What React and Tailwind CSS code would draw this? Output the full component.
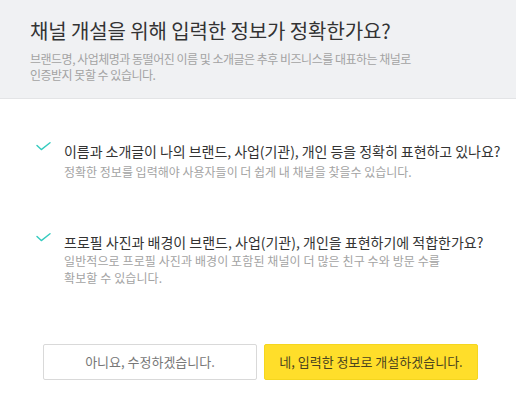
import React from "react";

function Check() {
  return (
    <svg width="15" height="10" viewBox="0 0 15 10" className="shrink-0">
      <polyline points="1,3.4 5.3,7.6 14,0.8" fill="none" stroke="#35cbbf" strokeWidth="1.4" strokeLinecap="round" strokeLinejoin="round" />
    </svg>
  );
}

export default function App() {
  const font = { fontFamily: '"Noto Sans CJK KR", "Noto Sans", sans-serif' };
  return (
    <div className="w-[516px] h-[416px] bg-white" style={font}>
      <div className="bg-[#f0f1f3] border-b border-[#e3e4e6] pl-[30px] pt-[18px] pb-[15px]">
        <h1 className="text-[20px] leading-[26px] text-[#333] tracking-[-0.1px]">채널 개설을 위해 입력한 정보가 정확한가요?</h1>
        <p className="mt-[7px] text-[12px] leading-[16px] text-[#a3a3a3] tracking-[-0.5px]">
          브랜드명, 사업체명과 동떨어진 이름 및 소개글은 추후 비즈니스를 대표하는 채널로
          <br />
          인증받지 못할 수 있습니다.
        </p>
      </div>
      <div className="pl-[36px] pt-[42px]">
        <div className="flex gap-[13px]">
          <div className="pt-[1px]"><Check /></div>
          <div>
            <div className="text-[14px] leading-[20px] text-[#333] tracking-[-0.05px]">이름과 소개글이 나의 브랜드, 사업(기관), 개인 등을 정확히 표현하고 있나요?</div>
            <div className="mt-[2px] text-[12px] leading-[17px] text-[#a3a3a3]">정확한 정보를 입력해야 사용자들이 더 쉽게 내 채널을 찾을수 있습니다.</div>
          </div>
        </div>
        <div className="flex gap-[13px] mt-[52px]">
          <div className="pt-[1px]"><Check /></div>
          <div>
            <div className="text-[14px] leading-[20px] text-[#333] tracking-[0px]">프로필 사진과 배경이 브랜드, 사업(기관), 개인을 표현하기에 적합한가요?</div>
            <div className="text-[12px] leading-[17px] text-[#a3a3a3] tracking-[0.1px]">
              일반적으로 프로필 사진과 배경이 포함된 채널이 더 많은 친구 수와 방문 수를
              <br />
              확보할 수 있습니다.
            </div>
          </div>
        </div>
      </div>
      <div className="flex gap-[7px] pl-[43px] mt-[58px]">
        <button className="w-[214px] h-[36px] border border-[#d9d9d9] rounded-[2px] bg-white text-[13px] text-[#777]">아니요, 수정하겠습니다.</button>
        <button className="w-[214px] h-[36px] border border-[#f5d61e] rounded-[2px] bg-[#ffde2a] text-[13px] text-[#4a4420]">네, 입력한 정보로 개설하겠습니다.</button>
      </div>
    </div>
  );
}
